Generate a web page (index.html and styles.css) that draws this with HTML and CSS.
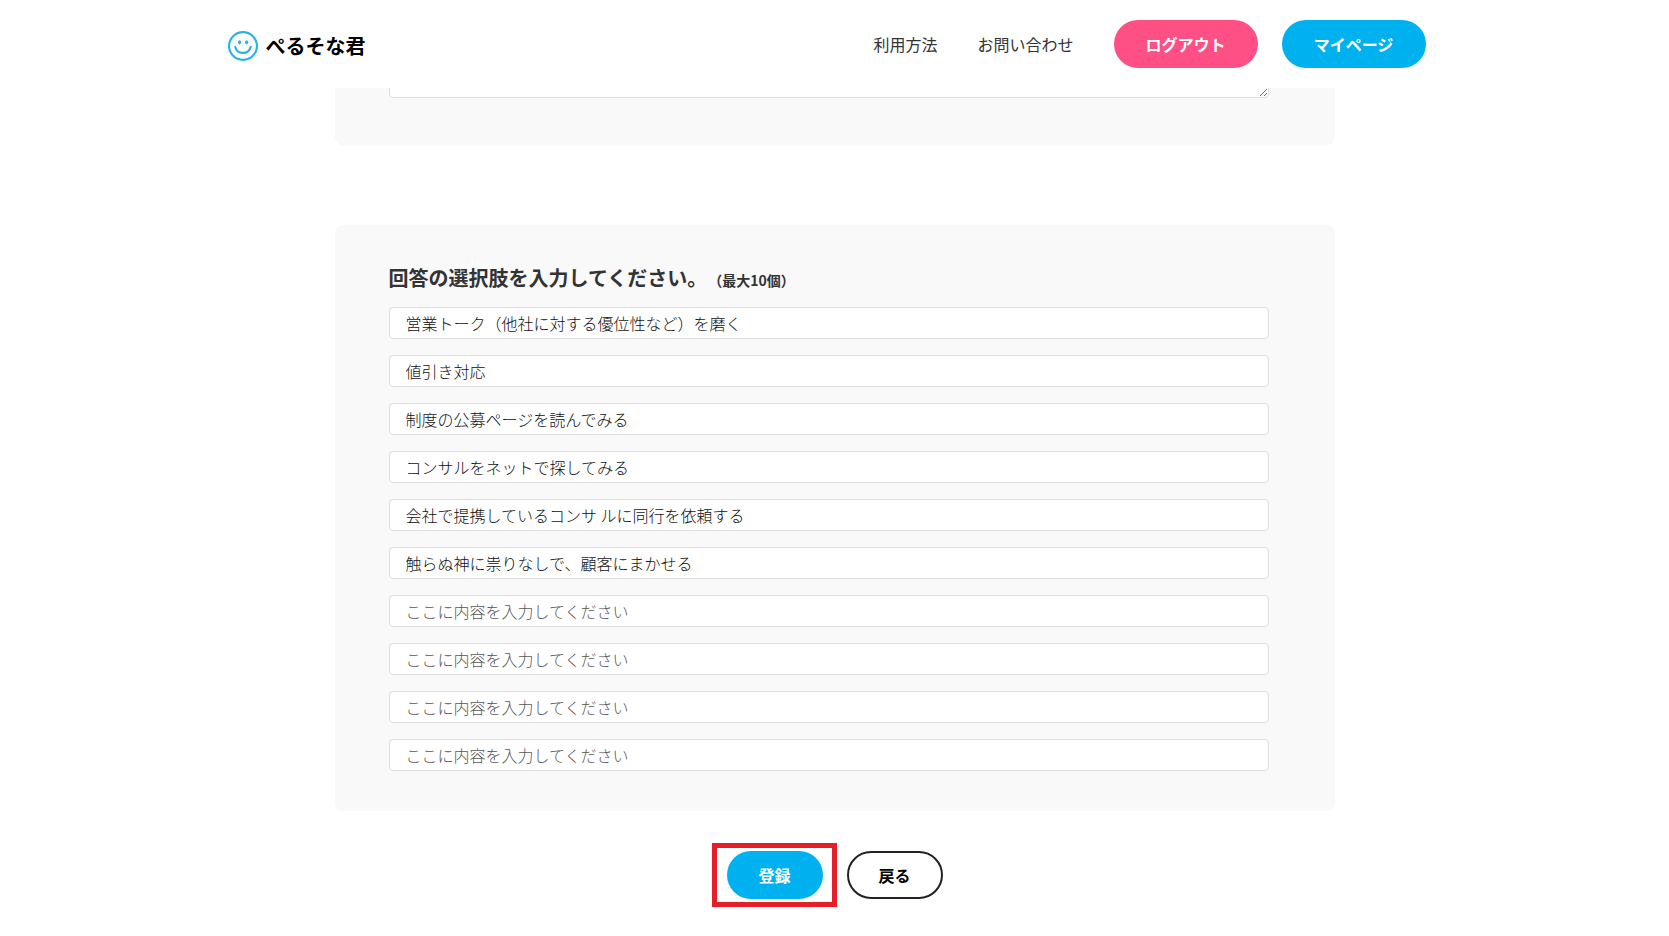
FILE: index.html
```html
<!DOCTYPE html>
<html lang="ja">
<head>
<meta charset="utf-8">
<meta name="viewport" content="width=device-width, initial-scale=1">
<title>ぺるそな君</title>
<link rel="stylesheet" href="styles.css">
</head>
<body>
<header class="header">
  <div class="header-inner">
    <a class="logo" href="#">
      <svg class="logo-mark" viewBox="0 0 28 28" aria-hidden="true">
        <circle cx="14" cy="14" r="13"/>
        <path d="M6.8 14.8C8.2 22.2 19.2 22.4 21.2 14.8"/>
        <ellipse class="eye" cx="10.8" cy="10.6" rx="1.4" ry="2"/>
        <ellipse class="eye" cx="17.4" cy="10.6" rx="1.4" ry="2"/>
      </svg>
      <span>ぺるそな君</span>
    </a>
    <nav class="nav">
      <a class="nav-link" href="#">利用方法</a>
      <a class="nav-link" href="#">お問い合わせ</a>
      <div class="nav-buttons">
        <a class="button button-pink" href="#">ログアウト</a>
        <a class="button button-blue" href="#">マイページ</a>
      </div>
    </nav>
  </div>
</header>
<main>
  <form class="form">
    <section class="card card-question">
      <textarea class="field textarea" aria-label="質問"></textarea>
    </section>
    <section class="card">
      <h2 class="card-title" id="choices">回答の選択肢を入力してください。<small>（最大10個）</small></h2>
      <div class="choices">
        <input class="field" type="text" aria-labelledby="choices" placeholder="ここに内容を入力してください" value="営業トーク（他社に対する優位性など）を磨く">
        <input class="field" type="text" aria-labelledby="choices" placeholder="ここに内容を入力してください" value="値引き対応">
        <input class="field" type="text" aria-labelledby="choices" placeholder="ここに内容を入力してください" value="制度の公募ページを読んでみる">
        <input class="field" type="text" aria-labelledby="choices" placeholder="ここに内容を入力してください" value="コンサルをネットで探してみる">
        <input class="field" type="text" aria-labelledby="choices" placeholder="ここに内容を入力してください" value="会社で提携しているコンサ ルに同行を依頼する">
        <input class="field" type="text" aria-labelledby="choices" placeholder="ここに内容を入力してください" value="触らぬ神に祟りなしで、顧客にまかせる">
        <input class="field" type="text" aria-labelledby="choices" placeholder="ここに内容を入力してください">
        <input class="field" type="text" aria-labelledby="choices" placeholder="ここに内容を入力してください">
        <input class="field" type="text" aria-labelledby="choices" placeholder="ここに内容を入力してください">
        <input class="field" type="text" aria-labelledby="choices" placeholder="ここに内容を入力してください">
      </div>
    </section>
    <div class="actions">
      <div class="highlight"><button class="button button-blue button-small" type="submit">登録</button></div>
      <button class="button button-outline button-small" type="button">戻る</button>
    </div>
  </form>
</main>
</body>
</html>
```
FILE: styles.css
```css
* { box-sizing: border-box; }

body {
  margin: 0;
  background: #fff;
  color: #333;
  font-family: "Noto Sans CJK JP", sans-serif;
  font-size: 16px;
  line-height: 24px;
}

a { color: inherit; text-decoration: none; }

.header {
  position: fixed;
  top: 0;
  left: 0;
  right: 0;
  z-index: 10;
  background: #fff;
}

.header-inner {
  display: flex;
  align-items: center;
  justify-content: space-between;
  max-width: 1214px;
  margin: 0 auto;
  padding: 20px 16px 20px 0;
}

.logo {
  display: flex;
  align-items: center;
  gap: 8px;
  padding-top: 3px;
  color: #000;
  font-size: 20px;
  font-weight: 700;
}

.logo-mark {
  width: 30px;
  height: 30px;
  fill: none;
  stroke: #29b2e6;
  stroke-width: 2;
  stroke-linecap: round;
}

.logo-mark .eye { fill: #29b2e6; stroke: none; }

.nav { display: flex; align-items: center; gap: 40px; }
.nav-buttons { display: flex; gap: 24px; }

.button {
  display: inline-flex;
  align-items: center;
  justify-content: center;
  min-width: 144px;
  height: 48px;
  padding: 0 24px;
  border: 0;
  border-radius: 24px;
  color: #fff;
  font-family: inherit;
  font-size: 16px;
  font-weight: 700;
  line-height: 24px;
}

.button-pink { background: #ff5085; }
.button-blue { background: #00b1f0; }
.button-outline { background: #fff; border: 2px solid #222; color: #000; }
.button-small { min-width: 96px; }

.form { max-width: 1000px; margin: 0 auto; }

.card {
  padding: 40px 66px 40px 54px;
  border-radius: 8px;
  background: #f9f9f9;
}

.card-question { margin-bottom: 80px; padding-bottom: 47px; }

.card-title {
  margin: 0 0 16px;
  font-size: 20px;
  font-weight: 700;
  line-height: 26px;
}

.card-title small { margin-left: 8px; font-size: 14px; line-height: 14px; }

.choices { display: grid; gap: 16px; }

.field {
  display: block;
  width: 100%;
  height: 32px;
  padding: 0 16px;
  border: 1px solid #ddd;
  border-radius: 4px;
  background: #fff;
  color: #111;
  font-family: inherit;
  font-size: 16px;
  font-weight: 300;
}

.field::placeholder { color: #555; }
.textarea { height: 58px; resize: vertical; }

.actions {
  display: flex;
  justify-content: center;
  gap: 24px;
  padding: 40px 0 37px;
}

.highlight { position: relative; display: flex; }

.highlight::after {
  content: "";
  position: absolute;
  inset: -8px -14px -8px -15px;
  border: 5px solid #e61e28;
  pointer-events: none;
}
```
